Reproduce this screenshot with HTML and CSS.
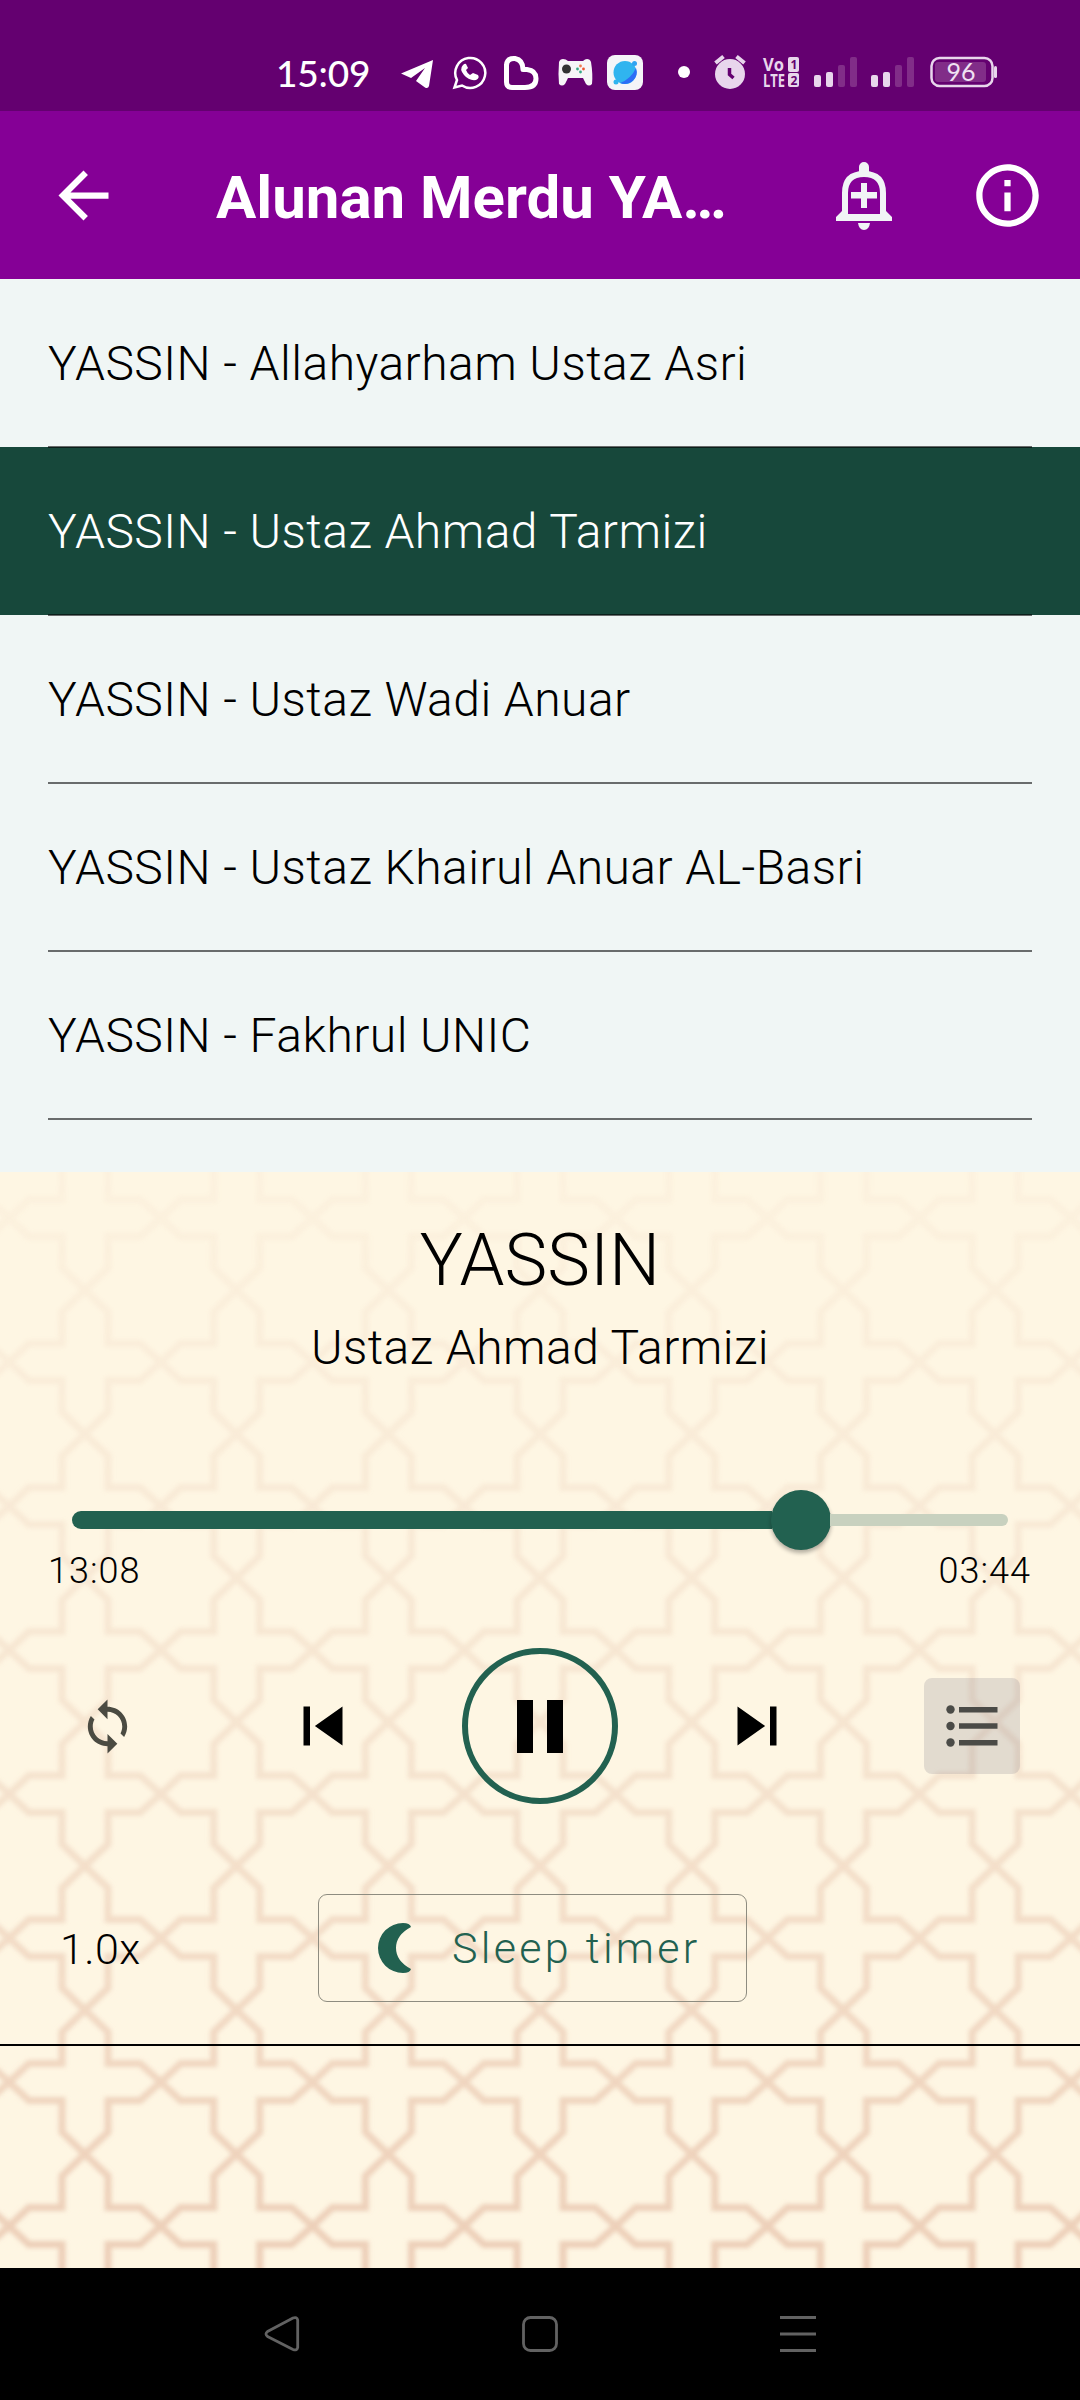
FILE: index.html
```html
<!DOCTYPE html>
<html lang="ms">
<head>
<meta charset="utf-8">
<title>Alunan Merdu YASSIN</title>
<link rel="stylesheet" href="styles.css">
</head>
<body>
<header class="status">
  <span class="clock">15:09</span>
  <svg class="status-icons" viewBox="390 40 620 70" width="620" height="70">
    <path fill="#fff" d="M401 73.500 433 60 429 86Q428 89 425 87.500L416 81 425 68 411 78Z"/>
    <g fill="none" stroke="#fff" stroke-width="2.500"><path d="M454.500 87.500 457 80A15 15 0 1 1 462 85.500Z"/></g>
    <path fill="#fff" d="M463 65q-4 4 1 10t12 5q4-2 2-5l-5-2-3 2q-3-2-4-5l2-2-2-4q-1-1-3 1Z"/>
    <path fill="none" stroke="#fff" stroke-width="5" stroke-linejoin="round" d="M506.500 82V65Q507 58 515 58.500 523 60 523 69.500H527Q536 70.500 536 78.500 536 87.500 525 87.500H512Q506.500 87.500 506.500 82Z"/>
    <path fill="#f7f5f8" d="M559 62q1-3 4-3 3 0 5 2h15q2-2 4-2 3 0 4 3 2 12 1 22-3 3-6 0l-3-6h-15l-3 6q-3 3-6 0-1-10 0-22Z"/>
    <circle cx="566.500" cy="69" r="4.500" fill="#333"/>
    <circle cx="580.500" cy="66" r="1.400" fill="#ef7a50"/><circle cx="583.500" cy="69" r="1.400" fill="#ef5530"/><circle cx="580.500" cy="72" r="1.400" fill="#36a886"/><circle cx="577.500" cy="69" r="1.400" fill="#36a886"/>
    <rect x="607" y="55" width="36" height="35" rx="8" fill="#f4f5f8"/>
    <circle cx="625" cy="72.500" r="11.500" fill="#30b4ef"/><path fill="#2d6df6" d="M636 68A12 12 0 0 1 620 83Q631 79 636 68Z"/><circle cx="634.500" cy="63.500" r="2.500" fill="#2fa4f2"/><circle cx="616" cy="82" r="2.500" fill="#30b4ef"/>
    <circle cx="684" cy="72" r="6" fill="#fff"/>
    <g fill="#e8d6ec">
      <circle cx="730" cy="74" r="15"/>
      <path stroke="#e8d6ec" stroke-width="4" d="M715.500 63 723.500 56.500M744.500 63 736.500 56.500"/>
      <rect x="788" y="57" width="11" height="15" rx="2"/><rect x="788" y="73" width="11" height="14" rx="2"/>
      <rect x="814" y="75" width="7" height="12" rx="2"/><rect x="826" y="72" width="7" height="15" rx="2"/>
      <rect x="871" y="75" width="7" height="12" rx="2"/><rect x="883" y="72" width="7" height="15" rx="2"/>
      <g fill="#812d88"><rect x="838" y="65" width="7" height="22" rx="2"/><rect x="850" y="57" width="7" height="30" rx="2"/><rect x="895" y="65" width="7" height="22" rx="2"/><rect x="907" y="57" width="7" height="30" rx="2"/></g>
      <rect x="994" y="66" width="3" height="12" rx="1.500"/>
    </g>
    <path fill="none" stroke="#640070" stroke-width="3.500" d="M729.500 68V74.500L733.500 78"/>
    <g class="lte"><text x="763" y="71" textLength="21" lengthAdjust="spacingAndGlyphs">Vo</text><text x="763" y="87" textLength="22" lengthAdjust="spacingAndGlyphs">LTE</text><text x="790.500" y="69" class="sim">1</text><text x="790.500" y="84.500" class="sim">2</text></g>
    <rect x="931.500" y="58" width="61" height="28" rx="8" fill="none" stroke="#e8d6ec" stroke-width="2.500"/>
    <rect x="935" y="62" width="51" height="20" rx="3" fill="#812d88"/>
    <text class="battery" x="961" y="81" text-anchor="middle">96</text>
  </svg>
</header>
<div class="appbar">
  <svg class="back" viewBox="0 0 24 24" width="75" height="75" fill="#fff"><path d="M20 11H7.830l5.590-5.590L12 4l-8 8 8 8 1.410-1.410L7.830 13H20v-2z"/></svg>
  <h1>Alunan Merdu YA…</h1>
  <svg class="bell" viewBox="830 155 70 80" width="70" height="80"><path fill="none" stroke="#f1f4f6" stroke-width="6" d="M845 217V193Q845 174 864 174T883 193V217Z"/><path fill="#f1f4f6" d="M859 176V167a5 5 0 0 1 10 0V176ZM842 211H848V214H880V211H886L892 217V221H836V217ZM858 223H870Q869 230 864 230T858 223ZM861 183h6v9h10v6.500h-10V208h-6V198.500h-10V192h10Z"/></svg>
  <svg class="info" viewBox="0 0 24 24" width="75" height="75" fill="#fff"><path d="M11 7h2v2h-2zm0 4h2v6h-2zm1-9C6.480 2 2 6.480 2 12s4.480 10 10 10 10-4.480 10-10S17.520 2 12 2zm0 18c-4.410 0-8-3.590-8-8s3.590-8 8-8 8 3.590 8 8-3.590 8-8 8z"/></svg>
</div>
<ul class="tracks">
  <li>YASSIN - Allahyarham Ustaz Asri</li>
  <li class="active">YASSIN - Ustaz Ahmad Tarmizi</li>
  <li>YASSIN - Ustaz Wadi Anuar</li>
  <li>YASSIN - Ustaz Khairul Anuar AL-Basri</li>
  <li>YASSIN - Fakhrul UNIC</li>
</ul>
<main class="player">
  <svg class="lattice" viewBox="0 1172 1080 1096">
    <defs>
      <pattern id="cross" x="9" y="2010" width="151.700" height="144" patternUnits="userSpaceOnUse">
        <path fill="none" stroke="#ecceb7" stroke-width="7" d="M-4 68 0 72 20 90.500H53V122L75.800 144 99 122V90.500H131L151.700 72 131 53.500H99V22L75.800 0 53 22V53.500H20L-4 76M147.700 68 155.700 76M147.700 76 155.700 68M71.800-4 79.800 4M79.800-4 71.800 4M71.800 140 79.800 148M79.800 140 71.800 148"/>
      </pattern>
      <linearGradient id="fade" x1="0" y1="0" x2="0" y2="1"><stop offset="0" stop-color="#fff" stop-opacity=".1"/><stop offset=".5" stop-color="#fff" stop-opacity=".42"/><stop offset="1" stop-color="#fff"/></linearGradient>
      <mask id="veil"><rect y="1172" width="1080" height="1096" fill="url(#fade)"/></mask>
      <filter id="soft" x="0" y="0" width="1" height="1"><feGaussianBlur stdDeviation="2.300"/></filter>
    </defs>
    <g mask="url(#veil)"><rect x="-20" y="1152" width="1120" height="1136" fill="url(#cross)" filter="url(#soft)"/></g>
  </svg>
  <h2>YASSIN</h2>
  <p class="reciter">Ustaz Ahmad Tarmizi</p>
  <div class="slider"><div class="played"></div><div class="thumb"></div><div class="rest"></div></div>
  <div class="times"><span>13:08</span><span>03:44</span></div>
  <div class="controls">
    <svg class="repeat" viewBox="0 0 24 24" width="59" height="59" fill="#4b4b42"><path d="M12 4V1L8 5l4 4V6c3.310 0 6 2.690 6 6 0 1.010-.25 1.970-.7 2.800l1.460 1.460C19.540 15.030 20 13.570 20 12c0-4.420-3.580-8-8-8zm0 14c-3.310 0-6-2.690-6-6 0-1.010.25-1.970.7-2.800L5.240 7.740C4.460 8.970 4 10.430 4 12c0 4.420 3.580 8 8 8v3l4-4-4-4v3z"/></svg>
    <svg class="prev" viewBox="0 0 24 24" width="78" height="78"><path d="M6 6h2v12H6zm3.500 6 8.500 6V6z"/></svg>
    <div class="pause"><svg viewBox="0 0 46 53" width="46" height="53"><path d="M0 0H16V53H0ZM30 0H46V53H30Z"/></svg></div>
    <svg class="next" viewBox="0 0 24 24" width="78" height="78"><path d="m6 18 8.500-6L6 6v12zM16 6v12h2V6h-2z"/></svg>
    <div class="queue"><svg viewBox="0 0 52 42" width="52" height="42" fill="#4b4b47"><circle cx="4.500" cy="4.500" r="4.200"/><circle cx="4.500" cy="21" r="4.200"/><circle cx="4.500" cy="37.500" r="4.200"/><path d="M13 2H51.500V7.500H13ZM13 18.300H51.500V23.800H13ZM13 35H51.500V40.500H13Z"/></svg></div>
  </div>
  <div class="options">
    <span class="speed">1.0x</span>
    <div class="sleep"><svg viewBox="0 0 34 50" width="34" height="50"><path fill="#226150" d="M25 0Q32 0 33 4 18 12 18 25T33 46Q32 50 25 50A25 25 0 0 1 25 0Z"/></svg><span>Sleep timer</span></div>
  </div>
</main>
<nav class="navbar">
  <svg viewBox="260 2310 560 50" width="560" height="50" fill="none" stroke="#626262" stroke-width="2.800"><path stroke-linejoin="round" d="M297.700 2320V2347.500Q297 2351 293 2349.500L267.500 2336.500Q264.500 2334 267.500 2331.500L293 2318Q297 2316.500 297.700 2320Z"/><rect x="523.500" y="2317.500" width="33" height="33" rx="7"/><path d="M780 2317.500H816M780 2334H816M780 2350.500H816"/></svg>
</nav>
</body>
</html>
```
FILE: styles.css
```css
* { box-sizing: border-box; margin: 0; padding: 0; }
body { width: 1080px; height: 2400px; overflow: hidden; display: flex; flex-direction: column; background: #000; color: #000; font-family: Roboto, sans-serif; font-weight: 300; }
svg { display: block; flex: none; }
.status { height: 111px; background: #640070; display: flex; padding-top: 40px; }
.clock { width: 390px; padding-left: 276px; color: #fff; font: 500 37px/65px Lato, sans-serif; letter-spacing: -.2px; }
.lte { fill: #e8d6ec; font: 700 18px/1 "Open Sans", sans-serif; }
.lte .sim { fill: #640070; font-size: 12px; }
.battery { font: 400 25px/1 Lato, sans-serif; fill: #f0e2f3; }
.appbar { height: 168px; background: #850096; display: flex; align-items: center; }
.back { margin-left: 46px; }
h1 { width: 516px; margin-left: 95px; white-space: nowrap; color: #fff; font-size: 60px; font-weight: 700; line-height: 80px; padding-top: 5px; }
.bell { margin-left: 98px; }
.info { margin-left: 70px; }
.tracks { height: 893px; background: #f0f6f5; list-style: none; }
.tracks li { position: relative; height: 168px; padding: 0 48px; font-size: 48px; line-height: 170px; letter-spacing: .45px; }
.tracks li::after { content: ""; position: absolute; z-index: 1; left: 48px; right: 48px; bottom: -1px; height: 2px; background: rgba(0,0,0,.56); }
.tracks .active { color: #fff; background-color: #17483b; }
.player { position: relative; isolation: isolate; height: 1096px; background: #fef6e3; display: flex; flex-direction: column; }
.lattice { position: absolute; inset: 0; width: 1080px; height: 1096px; z-index: -1; }
h2 { margin-top: 45px; text-align: center; font-size: 72px; line-height: 88px; font-weight: 300; }
.reciter { margin-top: 12px; text-align: center; font-size: 48px; line-height: 62px; letter-spacing: .45px; }
.slider { margin: 111px 72px 0; height: 60px; display: flex; align-items: center; }
.played { width: 700px; height: 18px; border-radius: 9px 0 0 9px; background: #226150; }
.thumb { width: 60px; height: 60px; margin-left: -1px; border-radius: 50%; background: #226150; box-shadow: 0 3px 4px rgba(0,0,0,.3); }
.rest { flex: 1; height: 12px; margin-left: -1px; border-radius: 0 6px 6px 0; background: #c8d1bf; }
.times { margin: 1px 49px 0 48px; display: flex; justify-content: space-between; font-size: 36px; line-height: 40px; letter-spacing: 1px; }
.controls { margin-top: 57px; height: 156px; display: flex; align-items: center; }
.repeat { margin-left: 78px; }
.prev { margin-left: 147px; }
.pause { width: 156px; height: 156px; margin-left: 100px; border: 6px solid #226150; border-radius: 50%; display: grid; place-items: center; }
.next { margin-left: 100px; }
.queue { margin-left: 128px; width: 96px; height: 96px; border-radius: 8px; background: rgba(90,90,110,.17); display: grid; place-items: center; }
.options { margin-top: 90px; height: 152px; border-bottom: 2px solid #000; display: flex; }
.speed { width: 318px; padding-left: 60px; font-size: 43px; line-height: 110px; letter-spacing: .4px; }
.sleep { width: 429px; height: 108px; border: 1.500px solid #8e8c80; border-radius: 9px; display: flex; align-items: center; padding-left: 59px; gap: 40px; color: #226150; font-size: 43px; letter-spacing: 3.300px; white-space: nowrap; }
.navbar { height: 132px; padding: 42px 0 0 260px; }
```
